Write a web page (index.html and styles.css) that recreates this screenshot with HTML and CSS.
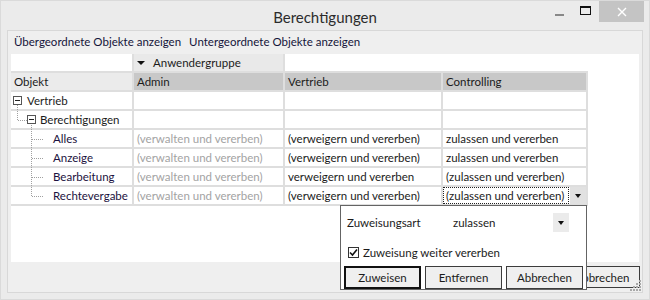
FILE: index.html
```html
<!DOCTYPE html>
<html lang="de">
<head>
    <meta charset="UTF-8">
    <title>Berechtigungen</title>
    <link rel="stylesheet" href="styles.css">
</head>
<body>
<div class="window">
    <div class="titlebar">
        <span></span>
        <span class="title">Berechtigungen</span>
        <div class="controls">
            <span class="ctl min"><i></i></span>
            <span class="ctl max"><i></i></span>
            <span class="ctl close">
                <svg width="10" height="10" viewBox="0 0 10 10">
                    <path d="M1 1 L9 9 M9 1 L1 9" stroke="#fff" stroke-width="1.4"/>
                </svg>
            </span>
        </div>
    </div>

    <div class="panel">
        <div class="links">
            <span class="link">Übergeordnete Objekte anzeigen</span>
            <span class="link">Untergeordnete Objekte anzeigen</span>
        </div>

        <div class="sheet">
            <div class="grid">
                <div class="cell first"></div>
                <div class="cell group"><span class="tri"></span>Anwendergruppe</div>
                <div class="cell fill"></div>

                <div class="cell first head-obj">Objekt</div>
                <div class="cell head">Admin</div>
                <div class="cell head">Vertrieb</div>
                <div class="cell head">Controlling</div>

                <div class="cell first lvl0">Vertrieb</div>
                <div class="cell"></div>
                <div class="cell"></div>
                <div class="cell"></div>

                <div class="cell first lvl1">Berechtigungen</div>
                <div class="cell"></div>
                <div class="cell"></div>
                <div class="cell"></div>

                <div class="cell first lvl2">Alles</div>
                <div class="cell muted">(verwalten und vererben)</div>
                <div class="cell">(verweigern und vererben)</div>
                <div class="cell">zulassen und vererben</div>

                <div class="cell first lvl2">Anzeige</div>
                <div class="cell muted">(verwalten und vererben)</div>
                <div class="cell">(verweigern und vererben)</div>
                <div class="cell">zulassen und vererben</div>

                <div class="cell first lvl2">Bearbeitung</div>
                <div class="cell muted">(verwalten und vererben)</div>
                <div class="cell">verweigern und vererben</div>
                <div class="cell">(zulassen und vererben)</div>

                <div class="cell first lvl2">Rechtevergabe</div>
                <div class="cell muted">(verwalten und vererben)</div>
                <div class="cell">(verweigern und vererben)</div>
                <div class="cell editing">
                    <span class="focus">(zulassen und vererben)</span>
                    <span class="drop"><span class="tri small"></span></span>
                </div>
            </div>

            <!-- tree lines over the first column -->
            <svg class="tree" width="50" height="150" viewBox="0 0 50 150">
                <g stroke="#a0a0a0" stroke-dasharray="1 1" fill="none">
                    <path d="M6.5 51 V66.5 H16"/>
                    <path d="M20.5 71 V142.5"/>
                    <path d="M21 85.5 H33 M21 104.5 H33 M21 123.5 H33 M21 142.5 H33"/>
                </g>
                <g fill="#fff" stroke="#555">
                    <rect x="2.5" y="42.5" width="8" height="8"/>
                    <rect x="16.5" y="61.5" width="8" height="8"/>
                </g>
                <path d="M4 46.5 H9 M18 65.5 H23" stroke="#222"/>
            </svg>
        </div>

        <div class="actions">
            <button class="btn">Abbrechen</button>
        </div>

        <svg class="grip" width="12" height="12" viewBox="0 0 12 12">
            <g fill="#a8a8a8">
                <rect x="9" y="1" width="2" height="2"/>
                <rect x="6" y="4" width="2" height="2"/>
                <rect x="9" y="4" width="2" height="2"/>
                <rect x="3" y="7" width="2" height="2"/>
                <rect x="6" y="7" width="2" height="2"/>
                <rect x="9" y="7" width="2" height="2"/>
                <rect x="0" y="10" width="2" height="2"/>
                <rect x="3" y="10" width="2" height="2"/>
                <rect x="6" y="10" width="2" height="2"/>
                <rect x="9" y="10" width="2" height="2"/>
            </g>
        </svg>
    </div>

    <div class="popup">
        <div class="prow">
            <span class="plabel">Zuweisungsart</span>
            <span class="pvalue">zulassen</span>
            <span class="pdrop"><span class="tri small"></span></span>
        </div>
        <label class="check">
            <span class="box">
                <svg width="9" height="9" viewBox="0 0 9 9">
                    <path d="M1 4.5 L3.5 7 L8 1.5" stroke="#111" stroke-width="1.6" fill="none"/>
                </svg>
            </span>
            Zuweisung weiter vererben
        </label>
        <div class="pbuttons">
            <button class="btn default">Zuweisen</button>
            <button class="btn">Entfernen</button>
            <button class="btn">Abbrechen</button>
        </div>
    </div>
</div>
</body>
</html>
```

FILE: styles.css
```css
* {
    box-sizing: border-box;
}

body {
    margin: 0;
    font-family: Lato, "Liberation Sans", sans-serif;
    font-size: 11.5px;
    color: #1b1b1b;
}

.window {
    position: relative;
    width: 650px;
    height: 300px;
    background-color: #ebebeb;
    border: 1px solid #dadada;
    display: flex;
    flex-direction: column;
}

/* title bar */
.titlebar {
    height: 29px;
    display: grid;
    grid-template-columns: 1fr auto 1fr;
}

.title {
    font-size: 15px;
    color: #2b2b2b;
    padding-top: 7px;
}

.controls {
    display: flex;
    justify-content: flex-end;
    margin-right: 5px;
}

.ctl {
    display: flex;
    align-items: center;
    justify-content: center;
    height: 21px;
}

.ctl.min {
    width: 26px;
}

.ctl.min i {
    display: block;
    width: 9px;
    height: 2px;
    margin-top: 6px;
    background-color: #888;
}

.ctl.max {
    width: 27px;
}

.ctl.max i {
    display: block;
    width: 11px;
    height: 9px;
    margin-top: -2px;
    border: 1px solid #111;
    border-top-width: 2px;
}

.ctl.close {
    width: 45px;
    background-color: #c4c4c4;
}

/* main panel */
.panel {
    position: relative;
    flex: 1;
    margin: 0 6px 6px 6px;
    background-color: #efefef;
    border: 1px solid #d8d8d8;
    display: flex;
    flex-direction: column;
}

.links {
    height: 23px;
    padding-left: 6px;
    padding-top: 4px;
    display: flex;
    gap: 8px;
}

.link {
    color: #14143a;
}

.sheet {
    position: relative;
    height: 208px;
    margin: 0 3px;
    background-color: #fff;
}

.grid {
    display: grid;
    grid-template-columns: 121px 149px 156px 143px 0;
    grid-auto-rows: 17px;
    gap: 2px;
    padding-bottom: 2px;
    width: fit-content;
    background-color: #dedede;
}

.cell {
    background-color: #fff;
    line-height: 17px;
    padding-left: 3px;
    white-space: nowrap;
    overflow: hidden;
}

.cell.first {
    grid-column: 1;
}

.cell.group {
    background-color: #e9e9e9;
    display: flex;
    align-items: center;
    gap: 8px;
}

.cell.fill {
    grid-column: 3 / span 3;
}

.head-obj {
    background-color: #ebebeb;
}

.cell.head {
    background-color: #c8c8c8;
}

.lvl0 {
    padding-left: 16px;
}

.lvl1 {
    padding-left: 29px;
}

.lvl2 {
    padding-left: 42px;
    color: #1c1240;
}

.muted {
    color: #a3a3a3;
}

.tri {
    width: 0;
    height: 0;
    border-left: 4px solid transparent;
    border-right: 4px solid transparent;
    border-top: 4px solid #111;
}

.tri.small {
    border-left-width: 3.5px;
    border-right-width: 3.5px;
    border-top-width: 4px;
}

.cell.editing {
    display: flex;
    padding-left: 0;
    gap: 1px;
}

.focus {
    flex: 1;
    border: 1px dotted #222;
    padding-left: 2px;
    line-height: 15px;
}

.drop {
    width: 16px;
    background-color: #e1e1e1;
    display: flex;
    align-items: center;
    justify-content: center;
}

.tree {
    position: absolute;
    left: 0;
    top: 0;
}

/* bottom buttons */
.actions {
    display: flex;
    justify-content: flex-end;
    gap: 5px;
    padding: 4px 2px 0 0;
}

.btn {
    font-family: Lato, "Liberation Sans", sans-serif;
    font-size: 11.5px;
    color: #1b1b1b;
    height: 22px;
    width: 76px;
    background-color: #efefef;
    border: 1px solid #3c3c3c;
    padding: 0;
}

.grip {
    position: absolute;
    right: 0;
    bottom: 1px;
}

/* the assignment popup */
.popup {
    position: absolute;
    left: 339px;
    top: 204px;
    width: 247px;
    height: 85px;
    background-color: #fff;
    border: 1px solid #646464;
    padding: 7px 3px 0 3px;
}

.prow {
    display: flex;
    align-items: center;
    height: 19px;
    margin-right: 14px;
}

.plabel {
    width: 109px;
    padding-left: 3px;
}

.pvalue {
    flex: 1;
}

.pdrop {
    width: 16px;
    height: 19px;
    background-color: #ebebeb;
    display: flex;
    align-items: center;
    justify-content: center;
}

.check {
    display: flex;
    align-items: center;
    gap: 4px;
    height: 18px;
    margin-top: 11px;
    padding-left: 4px;
}

.box {
    width: 11px;
    height: 11px;
    border: 1px solid #333;
    display: flex;
    align-items: center;
    justify-content: center;
}

.pbuttons {
    display: flex;
    gap: 4px;
    margin-top: 5px;
}

.pbuttons .btn {
    width: 77px;
    height: 23px;
    flex: none;
}

.btn.default {
    border: 2px solid #111;
}
```
